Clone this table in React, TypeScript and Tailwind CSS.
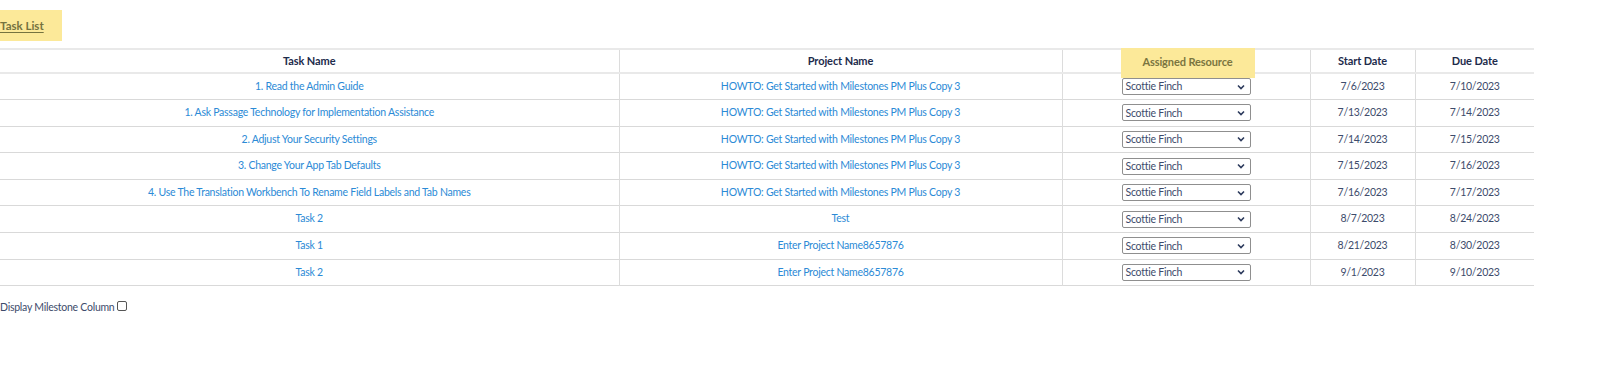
import React from 'react';

// Task rows
interface Task {
  name: string;
  project: string;
  start: string;
  due: string;
}

const howto = 'HOWTO: Get Started with Milestones PM Plus Copy 3';

const tasks: Task[] = [
  { name: '1. Read the Admin Guide', project: howto, start: '7/6/2023', due: '7/10/2023' },
  { name: '1. Ask Passage Technology for Implementation Assistance', project: howto, start: '7/13/2023', due: '7/14/2023' },
  { name: '2. Adjust Your Security Settings', project: howto, start: '7/14/2023', due: '7/15/2023' },
  { name: '3. Change Your App Tab Defaults', project: howto, start: '7/15/2023', due: '7/16/2023' },
  { name: '4. Use The Translation Workbench To Rename Field Labels and Tab Names', project: howto, start: '7/16/2023', due: '7/17/2023' },
  { name: 'Task 2', project: 'Test', start: '8/7/2023', due: '8/24/2023' },
  { name: 'Task 1', project: 'Enter Project Name8657876', start: '8/21/2023', due: '8/30/2023' },
  { name: 'Task 2', project: 'Enter Project Name8657876', start: '9/1/2023', due: '9/10/2023' },
];

// Select with chevron
const ResourceSelect: React.FC = () => {
  return (
    <div className="mx-auto flex h-[17px] w-[129px] items-center justify-between rounded-[2px] border border-[#8f8f8f] bg-white pl-[3px] pr-[5px] leading-none text-[#3d4b6b]">
      <span>Scottie Finch</span>
      <svg width="8" height="6" viewBox="0 0 8 6" fill="none">
        <path d="M1 1.5 L4 4.5 L7 1.5" stroke="#2c3a5c" strokeWidth="1.6" />
      </svg>
    </div>
  );
};

// Main App component
export default function App() {
  return (
    <div className="h-[372px] w-[1600px] bg-white text-[10.5px] tracking-[-0.25px] font-['Lato','Open_Sans',sans-serif] text-[#3d4b6b]">
      <div className="pt-[10px]">
        <div className="flex h-[31px] w-[62px] items-center bg-[#fce999]">
          <span className="text-[11.5px] tracking-normal font-bold text-[#75733f] underline underline-offset-2">Task List</span>
        </div>
      </div>

      <table className="mt-[7px] w-[1534px] table-fixed border-collapse">
        <colgroup>
          <col className="w-[619px]" />
          <col className="w-[443px]" />
          <col className="w-[248px]" />
          <col className="w-[105px]" />
          <col className="w-[119px]" />
        </colgroup>
        <thead>
          <tr className="h-[24px] border-y-2 border-[#e9e9e9] text-[11px] tracking-[-0.1px] font-bold text-[#1d2b4c]">
            <th className="text-center">Task Name</th>
            <th className="border-l border-[#dcdcdc] text-center">Project Name</th>
            <th className="relative border-l border-[#dcdcdc] text-center">
              <div className="absolute left-[58px] top-[-2px] flex h-[30px] w-[134px] items-center justify-center bg-[#fce999] pb-[2px] text-[#7a7540]">
                Assigned Resource
              </div>
            </th>
            <th className="border-l border-[#dcdcdc] text-center">Start Date</th>
            <th className="border-l border-[#dcdcdc] text-center">Due Date</th>
          </tr>
        </thead>
        <tbody>
          {tasks.map((t, i) => (
            <tr key={i} className="h-[26.6px] border-b border-[#d9d9d9]">
              <td className="text-center text-[#2b8ad6]">{t.name}</td>
              <td className="border-l border-[#dcdcdc] text-center text-[#2b8ad6]">{t.project}</td>
              <td className="border-l border-[#dcdcdc]">
                <ResourceSelect />
              </td>
              <td className="border-l border-[#dcdcdc] text-center">{t.start}</td>
              <td className="border-l border-[#dcdcdc] text-center">{t.due}</td>
            </tr>
          ))}
        </tbody>
      </table>

      <div className="mt-[14px] flex items-center gap-[3px] text-[#3d4b6b]">
        <span>Display Milestone Column</span>
        <span className="mb-[4px] inline-block h-[10px] w-[10px] rounded-[2px] border border-[#555]" />
      </div>
    </div>
  );
}
